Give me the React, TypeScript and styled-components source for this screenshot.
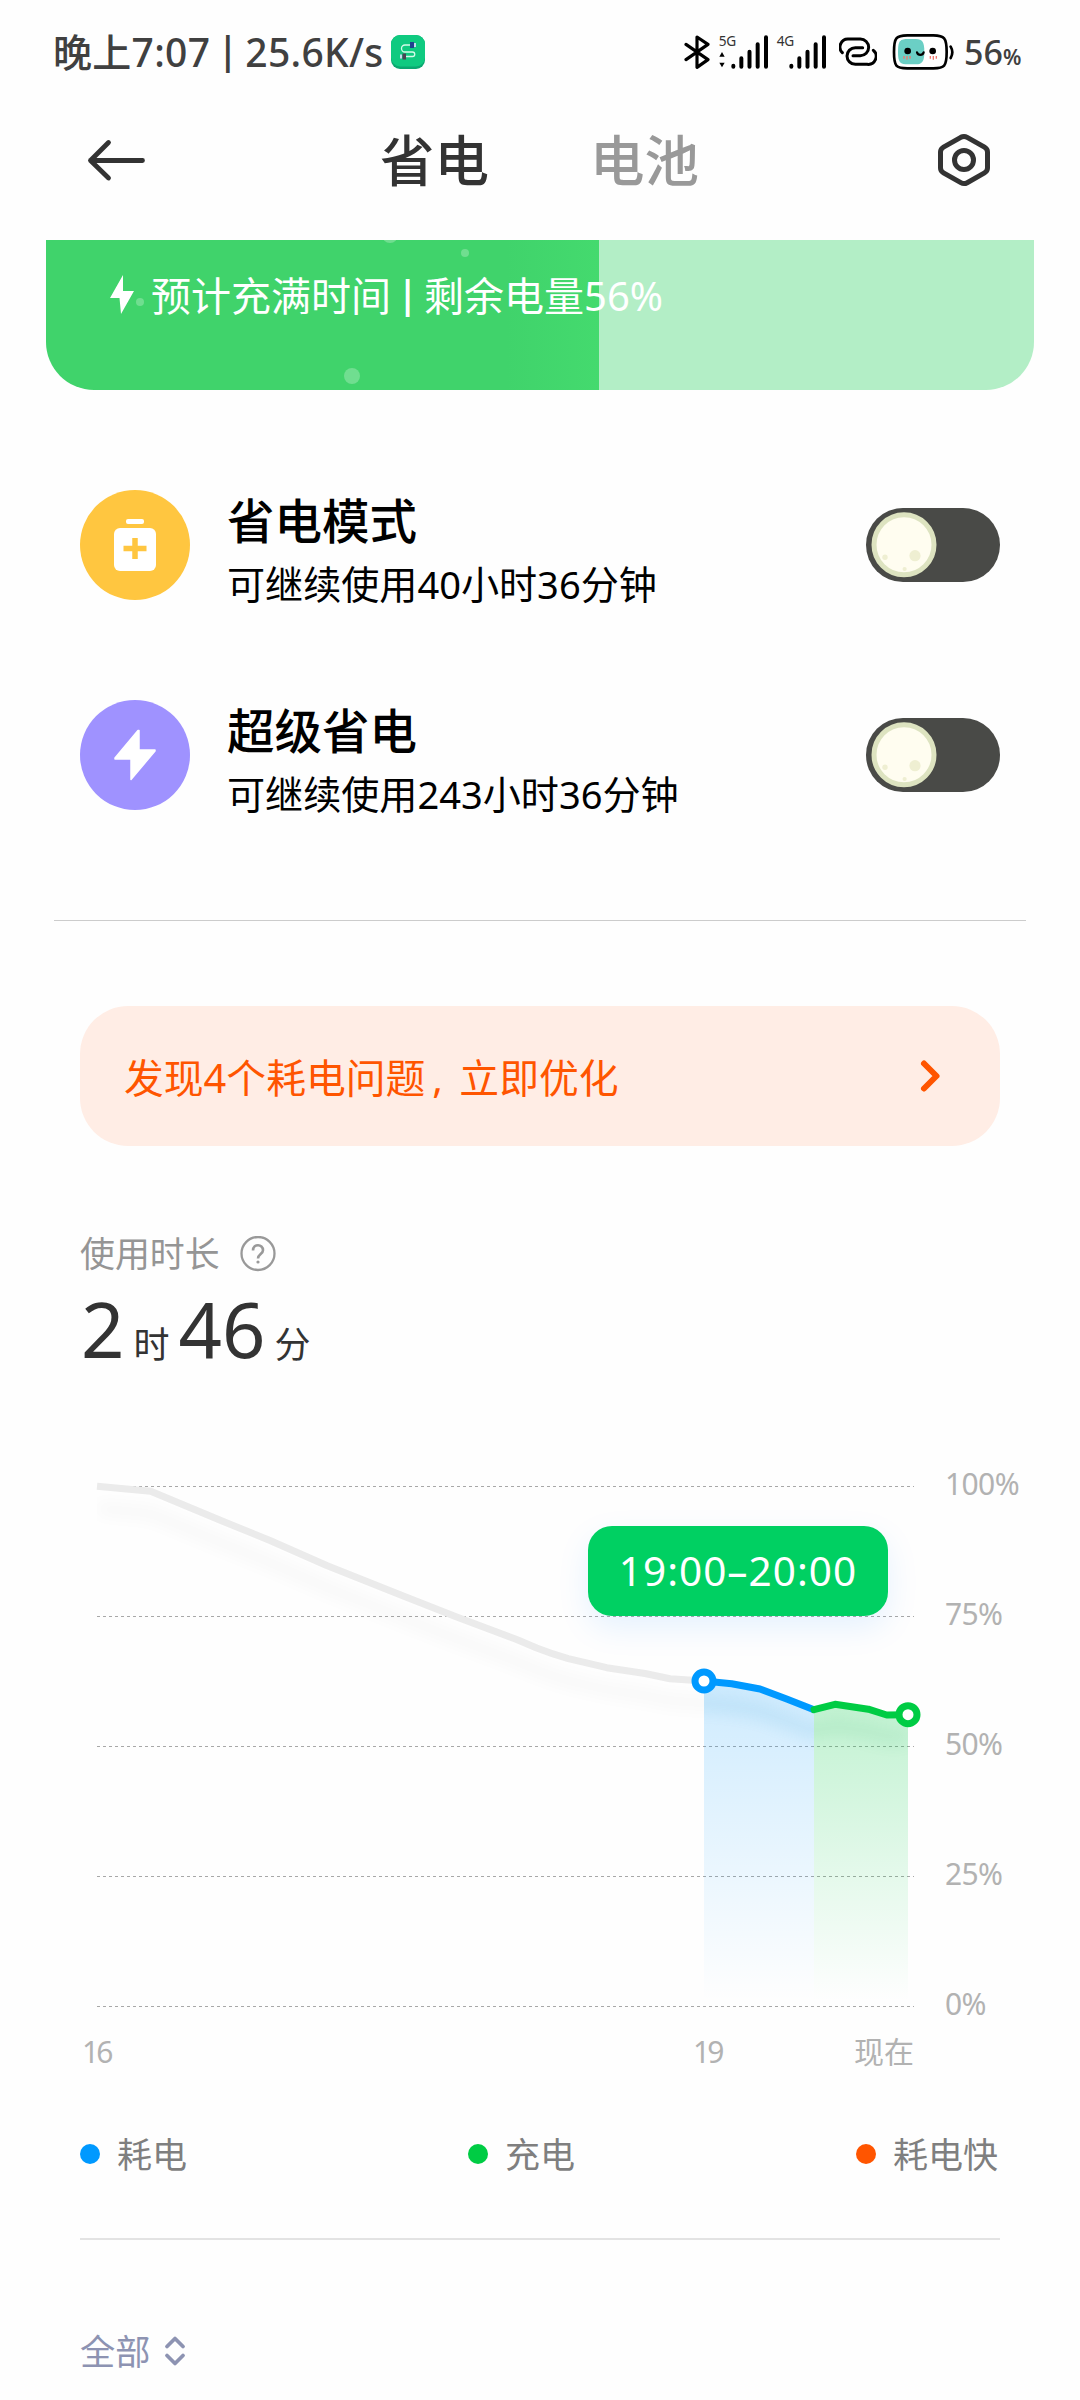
import React from 'react';
import styled, { createGlobalStyle } from 'styled-components';

const Global = createGlobalStyle`
  * { box-sizing: border-box; }
  html, body { margin: 0; padding: 0; background: #fefefe; }
  body { font-family: 'Noto Sans', 'Noto Sans CJK SC', sans-serif; color: #333; }
`;

const Page = styled.main`
  width: 1080px;
  height: 2400px;
  overflow: hidden;
  background: #fefefe;
  display: flex;
  flex-direction: column;
`;

const StatusBar = styled.div`
  height: 104px;
  flex: none;
  padding: 0 54px 0 53px;
  display: flex;
  align-items: center;
  color: #404040;
`;

const Clock = styled.span`
  font-size: 39px;
  line-height: 50px;
  font-weight: 500;
  letter-spacing: 0.3px;
  white-space: nowrap;
`;

const Bar = styled.span<{ $width: number }>`
  display: inline-block;
  width: ${p => p.$width}px;
  text-align: center;
  font-size: 0.96em;
  line-height: 1;
  font-weight: 600;
  transform: translateY(-3px);
`;

const AppBadge = styled.svg`
  margin-left: 7px;
  flex: none;
`;

const StatusIcons = styled.div`
  margin-left: auto;
  display: flex;
  align-items: center;
  height: 60px;
`;

const Glyph = styled.svg<{ $gap?: number }>`
  height: 60px;
  margin-left: ${p => p.$gap ?? 0}px;
  flex: none;
`;

const Percent = styled.div`
  margin-left: 9px;
  padding-top: 4px;
  width: 62px;
  font-size: 34px;
  line-height: 50px;
  font-weight: 500;
  white-space: nowrap;
  small {
    font-size: 21px;
    font-weight: 600;
  }
`;

const Header = styled.header`
  height: 112px;
  flex: none;
  padding: 0 86px;
  display: grid;
  grid-template-columns: 294px 210px 1fr auto;
  align-items: center;
`;

const Tab = styled.span<{ $active?: boolean }>`
  font-size: 54.5px;
  line-height: 70px;
  font-weight: 500;
  color: ${p => (p.$active ? '#333' : '#999')};
`;

const ChargeCard = styled.section`
  margin: 24px 46px 0;
  height: 150px;
  flex: none;
  border-radius: 0 0 48px 48px;
  overflow: hidden;
  position: relative;
  background: linear-gradient(90deg, #40d36b 0, #40d36b 460px, #44da6e 553px, #b3eec6 553px);
  padding: 30px 0 0 64px;
  display: flex;
  align-items: flex-start;
`;

const Bubble = styled.i<{ $x: number; $y: number; $r: number }>`
  position: absolute;
  left: ${p => p.$x - p.$r}px;
  top: ${p => p.$y - p.$r}px;
  width: ${p => p.$r * 2}px;
  height: ${p => p.$r * 2}px;
  border-radius: 50%;
  background: rgba(255, 255, 255, 0.25);
`;

const ChargeText = styled.span`
  margin: 1px 0 0 17px;
  font-size: 40px;
  line-height: 50px;
  color: #fff;
  white-space: nowrap;
`;

const Modes = styled.section`
  margin: 100px 80px 0;
  display: grid;
  row-gap: 100px;
`;

const ModeRow = styled.div`
  height: 110px;
  display: flex;
`;

const ModeIcon = styled.div<{ $color: string }>`
  width: 110px;
  height: 110px;
  border-radius: 50%;
  background: ${p => p.$color};
  display: flex;
  align-items: center;
  justify-content: center;
`;

const ModeText = styled.div`
  flex: 1;
  margin-left: 37px;
  color: #000;
`;

const ModeTitle = styled.div`
  padding-top: 1px;
  font-size: 47.5px;
  line-height: 60px;
  font-weight: 500;
`;

const ModeSub = styled.div`
  margin-top: 9px;
  font-size: 38.1px;
  line-height: 48px;
`;

const Toggle = styled.div`
  margin-top: 18px;
  width: 134px;
  height: 74px;
  border-radius: 37px;
  background: #494a47;
  padding: 4px 5px;
`;

const Divider = styled.hr<{ $top: number; $side: number; $h: number; $color: string }>`
  border: 0;
  flex: none;
  height: ${p => p.$h}px;
  margin: ${p => p.$top}px ${p => p.$side}px 0;
  background: ${p => p.$color};
`;

const Banner = styled.section`
  margin: 85px 80px 0;
  height: 140px;
  flex: none;
  border-radius: 48px;
  background: #ffede5;
  color: #ff5500;
  padding: 0 59px 0 44px;
  display: flex;
  align-items: center;
  justify-content: space-between;
  font-size: 39.8px;
`;

const Comma = styled.span`
  display: inline-block;
  width: 34px;
  padding-left: 7px;
`;

const UsageLabel = styled.div`
  margin: 87px 80px 0;
  height: 42px;
  flex: none;
  display: flex;
  align-items: center;
  gap: 20px;
  font-size: 34.9px;
  line-height: 42px;
  color: #959595;
`;

const HelpIcon = styled.svg`
  margin-top: -1px;
`;

const Duration = styled.div`
  margin: 0 81px;
  height: 108px;
  flex: none;
  line-height: 108px;
  font-size: 76px;
  display: flex;
  align-items: baseline;
  color: #333;
`;

const Unit = styled.span`
  font-size: 36px;
  margin: 0 9px;
`;

const Chart = styled.section`
  margin: 57px 0 0 80px;
  height: 580px;
  flex: none;
  position: relative;
  display: flex;
`;

const YAxis = styled.div`
  margin-left: 5px;
  padding-top: 24px;
  display: grid;
  grid-auto-rows: 40px;
  row-gap: 90px;
  align-content: start;
  font-size: 30px;
  line-height: 40px;
  letter-spacing: -0.6px;
  color: #b2b2b2;
`;

const Tooltip = styled.div`
  position: absolute;
  left: 508px;
  top: 86px;
  width: 300px;
  height: 90px;
  border-radius: 24px;
  background: #00d062;
  box-shadow: 0 12px 32px rgba(0, 130, 255, 0.1);
  color: #fff;
  font-size: 40.5px;
  padding-bottom: 2px;
  display: flex;
  align-items: center;
  justify-content: center;
  letter-spacing: 1px;
`;

const XAxis = styled.div`
  margin: 12px 0 0 82px;
  height: 40px;
  flex: none;
  display: grid;
  grid-template-columns: 611px 161px auto;
  font-size: 30px;
  line-height: 40px;
  color: #b2b2b2;
`;

const Hour = styled.span`
  letter-spacing: -3px;
`;

const Legend = styled.div`
  margin: 59px 80px 0;
  height: 44px;
  flex: none;
  display: grid;
  grid-template-columns: 388px 388px auto;
`;

const LegendItem = styled.div<{ $color: string }>`
  display: flex;
  align-items: center;
  gap: 17px;
  font-size: 35px;
  line-height: 44px;
  color: #7f7f7f;
  white-space: nowrap;
  span {
    padding-top: 2px;
  }
  &::before {
    content: '';
    width: 20px;
    height: 20px;
    margin-top: -1px;
    border-radius: 50%;
    background: ${p => p.$color};
  }
`;

const Filter = styled.div`
  margin: 89px 80px 0;
  height: 44px;
  flex: none;
  display: flex;
  align-items: center;
  gap: 14px;
  font-size: 35.2px;
  line-height: 44px;
  color: #8d93b2;
`;

const Signal = ({ label, gap, data }: { label: string; gap: number; data?: boolean }) => (
  <Glyph width="53" viewBox="111 6 159 180" $gap={gap}>
    <text x="116" y="78" fontSize="41" letterSpacing="-1" fill="#333">{label}</text>
    {data && <path d="M118 110l8-14 8 14zM118 128l8 14 8-14z" fill="#000" />}
    <g stroke="#000" strokeWidth="12" strokeLinecap="round">
      <path d="M160 137v3M184 115v25M208.5 95v45M233 73v67M258 52v88" />
    </g>
  </Glyph>
);

const MoonToggle = () => (
  <Toggle role="switch" aria-checked={false}>
    <svg width="66" height="66" viewBox="0 0 66 66">
      <circle cx="33" cy="32.7" r="30" fill="#fffdf0" stroke="#dde3c0" strokeWidth="5" />
      <g fill="#efefd2">
        <circle cx="44" cy="43.7" r="5.6" />
        <circle cx="14" cy="45.3" r="2.7" />
        <circle cx="33.6" cy="57" r="2.1" />
      </g>
    </svg>
  </Toggle>
);

const GRAY = 'M97 1486.3 L150.7 1491.3 L223.3 1521.5 L270 1540.5 L326.7 1565.5 L403.3 1596 L456.7 1617 L516.7 1639.5 L536.7 1648 Q552 1654 568.3 1658.7 L606.7 1667.7 L645 1673.5 L670 1678.7 L704 1681';
const BLUE = 'L731.7 1683.7 L760 1689 L786.7 1699 L814 1709.7';
const GREEN = 'L835 1704.3 L868.3 1709.2 L886.7 1715 L908 1714.7';

const Plot = () => (
  <svg width="860" height="580" viewBox="80 1440 860 580">
    <defs>
      <linearGradient id="blueFill" x1="0" x2="0" y1="0" y2="1">
        <stop offset="0" stopColor="#0099ff" stopOpacity=".19" />
        <stop offset="1" stopColor="#0099ff" stopOpacity="0" />
      </linearGradient>
      <linearGradient id="greenFill" x1="0" x2="0" y1="0" y2="1">
        <stop offset="0" stopColor="#00cc44" stopOpacity=".24" />
        <stop offset="1" stopColor="#00cc44" stopOpacity="0" />
      </linearGradient>
      <filter id="soft" filterUnits="userSpaceOnUse" x="60" y="1440" width="900" height="400">
        <feGaussianBlur stdDeviation="8" />
      </filter>
      <clipPath id="grayClip"><rect x="97" y="1440" width="607" height="580" /></clipPath>
      <clipPath id="blueClip"><rect x="704" y="1440" width="110" height="580" /></clipPath>
      <clipPath id="greenClip"><rect x="814" y="1440" width="94" height="580" /></clipPath>
    </defs>
    <g stroke="#a8a8a8" strokeWidth="1" strokeDasharray="3 3">
      {[1486.5, 1616.5, 1746.5, 1876.5, 2006.5].map(y => (
        <line key={y} x1="97" x2="914" y1={y} y2={y} />
      ))}
    </g>
    <path d={`M704 1681 ${BLUE} V2001 H704 Z`} fill="url(#blueFill)" />
    <path d={`M814 1709.7 ${GREEN} V2001 H814 Z`} fill="url(#greenFill)" />
    <g fill="none" strokeWidth="14">
      <g clipPath="url(#grayClip)">
        <path d={GRAY + BLUE} transform="translate(0 22)" filter="url(#soft)" stroke="#000" opacity=".024" />
      </g>
      <g clipPath="url(#blueClip)">
        <path d={GRAY + BLUE + GREEN} transform="translate(0 22)" filter="url(#soft)" stroke="#0080c0" opacity=".1" />
      </g>
      <g clipPath="url(#greenClip)">
        <path d={GRAY + BLUE + GREEN} transform="translate(0 22)" filter="url(#soft)" stroke="#009944" opacity=".09" />
      </g>
    </g>
    <g fill="none" strokeWidth="7" strokeLinejoin="round">
      <path d={GRAY} stroke="#ebebeb" />
      <path d={`M704 1681 ${BLUE}`} stroke="#0099ff" />
      <path d={`M814 1709.7 ${GREEN}`} stroke="#00cc44" strokeLinecap="round" />
    </g>
    <circle cx="704" cy="1681" r="9" fill="#fff" stroke="#0099ff" strokeWidth="7" />
    <circle cx="908" cy="1714.7" r="9" fill="#fff" stroke="#00cc44" strokeWidth="7" />
  </svg>
);

export default function App() {
  return (
    <Page>
      <Global />
      <StatusBar>
        <Clock>晚上7:07<Bar $width={35}>|</Bar>25.6K/s</Clock>
        <AppBadge width="34" height="34" viewBox="0 0 34 34">
          <rect width="34" height="34" rx="9" fill="#0aa870" />
          <rect width="34" height="31.5" rx="9" fill="#0fca80" />
          <path d="M20 10h-6a3.500 3.500 0 0 0 0 7h7.500a2 2 0 0 1 0 4.500H14" fill="none" stroke="#d5fbe9" strokeWidth="1.300" />
          <rect x="19" y="7" width="4" height="6" fill="#20418e" />
          <rect x="23" y="8" width="2" height="4" fill="#c5d8ee" />
          <rect x="11.500" y="18.500" width="3.500" height="6" fill="#4c4254" />
          <rect x="9" y="19.500" width="2" height="4" fill="#c5d8ee" />
        </AppBadge>
        <StatusIcons>
          <Glyph width="27" viewBox="12 6 81 180">
            <path d="M18 73L84 119 51 142V51L84 73 18 119" fill="none" stroke="#000" strokeWidth="9.500" strokeLinejoin="round" strokeLinecap="round" />
          </Glyph>
          <Signal label="5G" gap={6} data />
          <Signal label="4G" gap={5} />
          <Glyph width="38" viewBox="477 6 114 180" $gap={11}>
            <path d="M487 98A24 24 0 0 1 505 57H541A25 25 0 0 1 541 107H519M580 91A24 24 0 0 1 561 133H526A25 25 0 0 1 526 83H548" fill="none" stroke="#000" strokeWidth="9" strokeLinecap="round" />
          </Glyph>
          <Glyph width="63" viewBox="636 6 189 180" $gap={15}>
            <path d="M642 96C642 52 648 47 682 46H760C793 47 800 52 800 96S793 144 760 145H682C648 144 642 140 642 96Z" fill="#fff" stroke="#000" strokeWidth="8" />
            <path d="M654 95C654 62 660 57 685 57H708C727 58 733 66 733 95S727 132 708 133H685C660 133 654 128 654 95Z" fill="#6bcfc5" />
            <circle cx="683" cy="93" r="10" />
            <circle cx="758" cy="93" r="10" />
            <path d="M711 97C714 107 728 107 731 97" fill="none" stroke="#000" strokeWidth="6.500" strokeLinecap="round" />
            <path d="M672 108v8M681 108v11M690 108v8M751 108v8M760 108v11M769 108v8" stroke="#f07870" strokeWidth="4" />
            <path d="M812 80Q822 97 812 114" fill="none" stroke="#000" strokeWidth="8" strokeLinecap="round" />
          </Glyph>
          <Percent>56<small>%</small></Percent>
        </StatusIcons>
      </StatusBar>

      <Header>
        <svg width="62" height="44" viewBox="0 0 62 44" fill="none" stroke="#333" strokeWidth="4.800" strokeLinecap="round" strokeLinejoin="round">
          <path d="M22.500 4.500L4.500 22.500 22.500 40M4.500 22.500H56.500" />
        </svg>
        <Tab $active>省电</Tab>
        <Tab>电池</Tab>
        <svg width="60" height="60" viewBox="0 0 60 60" fill="none" stroke="#333" strokeWidth="5">
          <path d="M26.800 7.300 9.500 17.200Q6.500 19 6.500 22V38Q6.500 41 9.500 42.800L26.800 52.700Q30 54.500 33.200 52.700L50.500 42.800Q53.500 41 53.500 38V22Q53.500 19 50.500 17.200L33.200 7.300Q30 5.500 26.800 7.300Z" />
          <circle cx="30" cy="30" r="9.500" />
        </svg>
      </Header>

      <ChargeCard>
        <Bubble $x={344} $y={-5} $r={8} />
        <Bubble $x={418.5} $y={13} $r={4} />
        <Bubble $x={94} $y={62} $r={4} />
        <Bubble $x={306} $y={136} $r={8} />
        <svg width="24" height="50" viewBox="0 0 24 50">
          <path d="M13 5L0 28h9.500L11 44 24 21h-11z" fill="#fff" />
        </svg>
        <ChargeText>预计充满时间<Bar $width={33}>|</Bar>剩余电量56%</ChargeText>
      </ChargeCard>

      <Modes>
        <ModeRow>
          <ModeIcon $color="#ffc640">
            <svg width="42" height="52" viewBox="0 0 42 52">
              <rect x="12" y="0" width="18" height="5" rx="2" fill="#fff" />
              <rect x="0" y="9" width="42" height="43" rx="6" fill="#fff" />
              <path d="M21 19v21M9.500 29.500h23" stroke="#ffc640" strokeWidth="5.500" />
            </svg>
          </ModeIcon>
          <ModeText>
            <ModeTitle>省电模式</ModeTitle>
            <ModeSub>可继续使用40小时36分钟</ModeSub>
          </ModeText>
          <MoonToggle />
        </ModeRow>
        <ModeRow>
          <ModeIcon $color="#9f92ff">
            <svg width="42" height="52" viewBox="0 0 42 52">
              <path d="M24 1.500 1 29V30H17V50.500L41 22V21H25V1.500Z" fill="#fff" stroke="#fff" strokeWidth="1.500" strokeLinejoin="round" />
            </svg>
          </ModeIcon>
          <ModeText>
            <ModeTitle>超级省电</ModeTitle>
            <ModeSub>可继续使用243小时36分钟</ModeSub>
          </ModeText>
          <MoonToggle />
        </ModeRow>
      </Modes>

      <Divider $top={110} $side={54} $h={1} $color="#ccc" />

      <Banner>
        <span>发现4个耗电问题<Comma>,</Comma>立即优化</span>
        <svg width="22" height="34" viewBox="0 0 22 34" fill="none" stroke="#ff5500" strokeWidth="6" strokeLinecap="round" strokeLinejoin="round">
          <path d="M5 4.500 17.500 17 5 29.500" />
        </svg>
      </Banner>

      <UsageLabel>
        使用时长
        <HelpIcon width="36" height="36" viewBox="0 0 36 36" fill="none" stroke="#999">
          <circle cx="18" cy="17.500" r="16.500" strokeWidth="2.300" />
          <path d="M13 14.500C13 7.500 23 7.500 23 14.200 23 18 18 18 18 22.500" strokeWidth="2.600" />
          <circle cx="18" cy="26" r="1.600" fill="#999" stroke="none" />
        </HelpIcon>
      </UsageLabel>
      <Duration>
        2<Unit>时</Unit>46<Unit>分</Unit>
      </Duration>

      <Chart>
        <Plot />
        <YAxis>
          {['100%', '75%', '50%', '25%', '0%'].map(t => <span key={t}>{t}</span>)}
        </YAxis>
        <Tooltip>19:00–20:00</Tooltip>
      </Chart>
      <XAxis>
        <Hour>16</Hour>
        <Hour>19</Hour>
        <span>现在</span>
      </XAxis>

      <Legend>
        <LegendItem $color="#0099ff"><span>耗电</span></LegendItem>
        <LegendItem $color="#00cc44"><span>充电</span></LegendItem>
        <LegendItem $color="#ff5500"><span>耗电快</span></LegendItem>
      </Legend>

      <Divider $top={63} $side={80} $h={2} $color="#e3e3e3" />

      <Filter>
        全部
        <svg width="22" height="32" viewBox="0 0 22 32" fill="none" stroke="#8d93b2" strokeWidth="3.800" strokeLinecap="round" strokeLinejoin="round">
          <path d="M3 11.500 11 3.500 19 11.500M3 20.500 11 28.500 19 20.500" />
        </svg>
      </Filter>
    </Page>
  );
}
